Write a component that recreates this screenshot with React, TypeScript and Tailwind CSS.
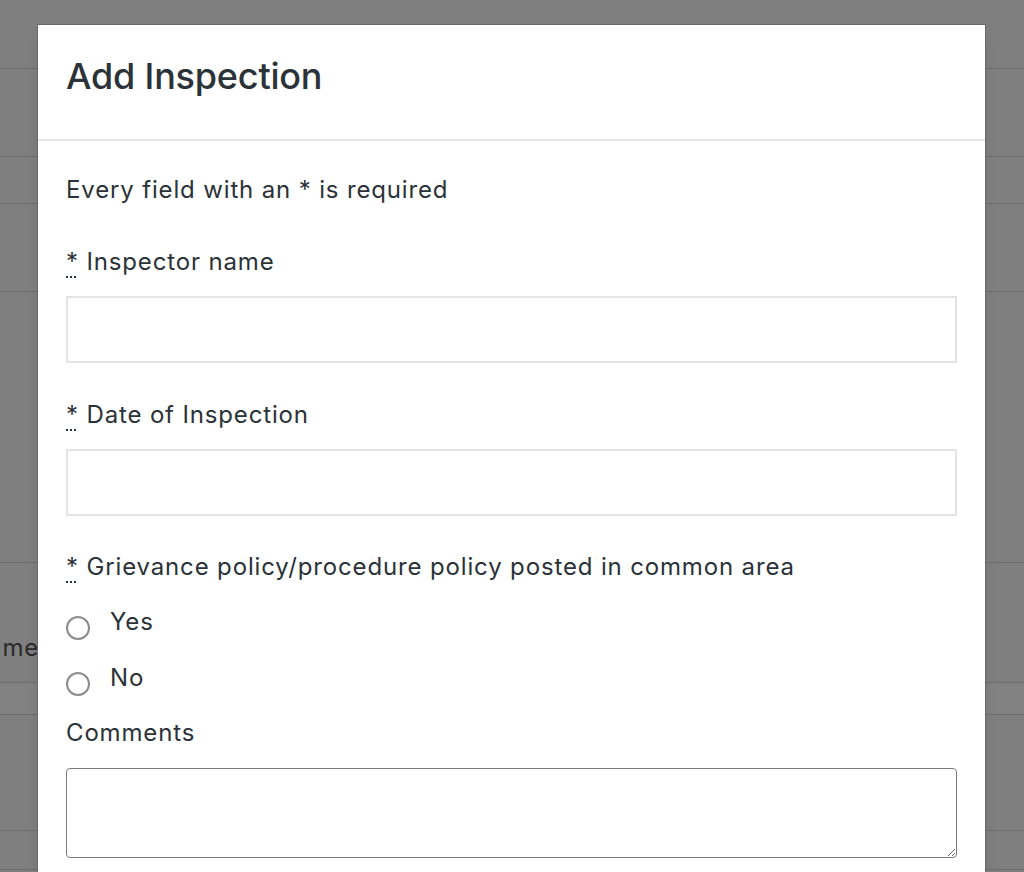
import React from 'react';

const rows = [
  { h: 'h-[69px]', text: '' },
  { h: 'h-[88px]', text: '' },
  { h: 'h-[47px]', text: '' },
  { h: 'h-[88px]', text: '' },
  { h: 'h-[271px]', text: '' },
  { h: 'h-[120px]', text: 'Comments' },
  { h: 'h-[32px]', text: '', light: true },
  { h: 'h-[116px]', text: '' },
  { h: 'h-[39px]', text: '' },
];

function Required() {
  return (
    <abbr title="required" className="underline decoration-dotted decoration-2 underline-offset-[6px]">
      *
    </abbr>
  );
}

function Backdrop() {
  return (
    <div className="flex flex-col">
      {rows.map((row, i) => (
        <div
          key={i}
          className={`${row.h} flex items-center border-b border-[#6d6d6d] ${row.light ? 'bg-[#828282]' : 'bg-[#7f7f7f]'}`}
        >
          {row.text && (
            <span className="-ml-[53px] mt-[50px] text-[24px] tracking-[0.85px] text-[#2a2a2a]">{row.text}</span>
          )}
        </div>
      ))}
    </div>
  );
}

export default function App() {
  return (
    <div className="relative w-[1024px] h-[872px] overflow-hidden bg-[#7f7f7f] font-['Inter',sans-serif]">
      <Backdrop />

      <div className="absolute left-[37px] top-[24px] w-[949px] h-[900px] bg-white border border-[#6a6a6a] shadow-lg text-[#2b3238]">
        <div className="px-[28px] pt-[24px] pb-[36px] border-b-2 border-[#e3e6e9]">
          <h4 className="text-[36px] leading-[54px] font-medium tracking-[-0.2px]">Add Inspection</h4>
        </div>

        <div className="px-[28px] pt-[31px] text-[24px] leading-[36px] tracking-[0.85px]">
          <p className="mb-[36px]">Every field with an * is required</p>

          <div className="mb-[34px]">
            <label className="block mb-[16px]">
              <Required /> Inspector name
            </label>
            <input type="text" className="block w-full h-[67px] border-2 border-[#e4e4e4] bg-white outline-none" />
          </div>

          <div className="mb-[33px]">
            <label className="block mb-[16px]">
              <Required /> Date of Inspection
            </label>
            <input type="text" className="block w-full h-[67px] border-2 border-[#e4e4e4] bg-white outline-none" />
          </div>

          <div>
            <div className="mb-[19px]">
              <Required /> Grievance policy/procedure policy posted in common area
            </div>
            <div className="flex flex-col gap-[20px]">
              {['Yes', 'No'].map((opt) => (
                <label key={opt} className="flex items-center">
                  <input
                    type="radio"
                    name="grievance"
                    className="appearance-none w-6 h-6 mt-[12px] rounded-full border-2 border-[#8c8c8c] bg-white"
                  />
                  <span className="ml-[20px]">{opt}</span>
                </label>
              ))}
            </div>
            <label className="block mt-[19px] mb-[17px]">Comments</label>
            <textarea className="block w-full h-[90px] rounded-[4px] border border-[#7a7a7a] outline-none" />
          </div>
        </div>
      </div>
    </div>
  );
}
